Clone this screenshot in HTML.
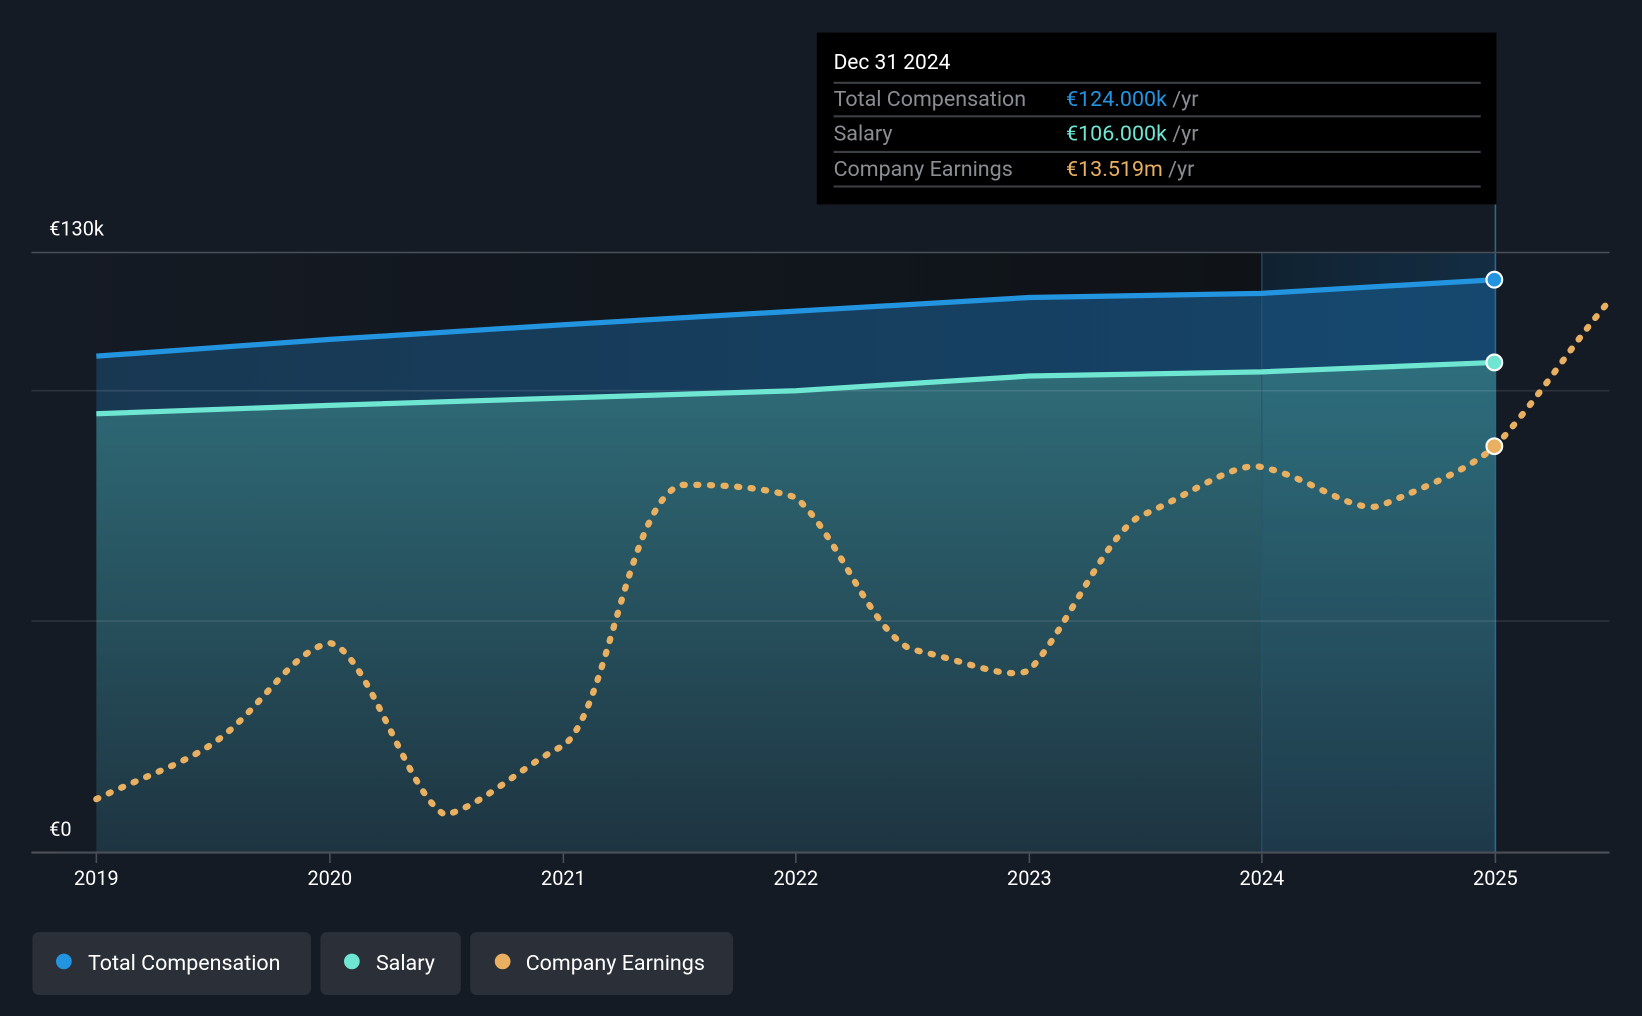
<!DOCTYPE html>
<html><head><meta charset="utf-8"><style>
html,body{margin:0;padding:0;background:#151b24;}
svg{display:block}
text{font-family:"Roboto","Liberation Sans",sans-serif;}
</style></head><body>
<svg width="1642" height="1016" viewBox="0 0 1568 970" xmlns="http://www.w3.org/2000/svg">
<defs>
<linearGradient id="dk" x1="0" x2="1" y1="0" y2="0"><stop offset="0" stop-color="#151b24"/><stop offset="1" stop-color="#0f1318"/></linearGradient>
<linearGradient id="hl" x1="0" x2="1" y1="0" y2="0"><stop offset="0" stop-color="#0f1b27"/><stop offset="1" stop-color="#13263a"/></linearGradient>
<linearGradient id="sal" x1="0" x2="0" y1="0" y2="1"><stop offset="0" stop-color="#2f6d79"/><stop offset="1" stop-color="#1e3441"/></linearGradient>
<linearGradient id="tot" x1="0" x2="1" y1="0" y2="0"><stop offset="0" stop-color="#183852"/><stop offset="1" stop-color="#15446a"/></linearGradient>
</defs>
<rect width="1568" height="970" fill="#151b24"/>
<rect x="30" y="241" width="1175" height="573" fill="url(#dk)"/>
<rect x="1205" y="241" width="223" height="573" fill="url(#hl)"/>
<path d="M92,340 L315,324 L538,310 L760,297 L983,284 L1205,280 L1428,267 L1428,346 L1205,355 L983,359 L760,373 L538,380 L315,387 L92,395 Z" fill="url(#tot)"/>
<path d="M92,395 L315,387 L538,380 L760,373 L983,359 L1205,355 L1428,346 L1428,814 L92,814 Z" fill="url(#sal)"/>
<rect x="1205" y="241" width="223" height="573" fill="#2a7bb0" opacity="0.08"/>
<line x1="1205" y1="241" x2="1205" y2="814" stroke="#2a5570" stroke-width="1"/>
<line x1="1428" y1="195" x2="1428" y2="814" stroke="#2a6a90" stroke-width="1.5"/>
<line x1="30" y1="241" x2="1537" y2="241" stroke="#4a4f58" stroke-width="1.5"/>
<line x1="30" y1="373" x2="1537" y2="373" stroke="#ffffff" stroke-opacity="0.1" stroke-width="1.5"/>
<line x1="30" y1="593" x2="1537" y2="593" stroke="#ffffff" stroke-opacity="0.1" stroke-width="1.5"/>
<line x1="30" y1="814" x2="1537" y2="814" stroke="#4a4f58" stroke-width="2"/>
<g stroke="#4a4f58" stroke-width="1.5">
<line x1="92" y1="814" x2="92" y2="824"/><line x1="315" y1="814" x2="315" y2="824"/><line x1="538" y1="814" x2="538" y2="824"/><line x1="760" y1="814" x2="760" y2="824"/><line x1="983" y1="814" x2="983" y2="824"/><line x1="1205" y1="814" x2="1205" y2="824"/><line x1="1428" y1="814" x2="1428" y2="824"/>
</g>
<path d="M92,340 L315,324 L538,310 L760,297 L983,284 L1205,280 L1428,267" fill="none" stroke="#2394e0" stroke-width="5"/>
<path d="M92,395 L315,387 L538,380 L760,373 L983,359 L1205,355 L1428,346" fill="none" stroke="#6ee6d2" stroke-width="5"/>
<path d="M92,763 C140,740 180,728 210,705 C250,675 280,620 315,614 C350,620 390,760 425,778 C460,770 500,730 538,712 C580,680 600,480 650,463 C700,462 740,468 760,475 C800,510 830,600 870,620 C920,630 960,650 983,640 C1020,600 1060,500 1095,490 C1140,470 1180,440 1205,446 C1250,455 1290,490 1318,483 C1360,465 1400,450 1428,426 C1470,380 1500,330 1537,287" fill="none" stroke="#e8b060" stroke-width="6" stroke-dasharray="2 11" stroke-linecap="round"/>
<circle cx="1427" cy="267" r="7.5" fill="#2394e0" stroke="#fff" stroke-width="2"/>
<circle cx="1427" cy="346" r="7.5" fill="#6ee6d2" stroke="#fff" stroke-width="2"/>
<circle cx="1427" cy="426" r="7.5" fill="#e8b060" stroke="#fff" stroke-width="2"/>
<text x="47" y="225" fill="#fff" font-size="19">€130k</text>
<text x="47" y="798" fill="#fff" font-size="19">€0</text>
<g fill="#fff" font-size="19" text-anchor="middle">
<text x="92" y="845">2019</text><text x="315" y="845">2020</text><text x="538" y="845">2021</text><text x="760" y="845">2022</text><text x="983" y="845">2023</text><text x="1205" y="845">2024</text><text x="1428" y="845">2025</text>
</g>
<rect x="780" y="31" width="649" height="164" fill="#000"/>
<text x="796" y="66" fill="#fff" font-size="20">Dec 31 2024</text>
<g stroke="#3c3f44" stroke-width="2"><line x1="796" y1="79" x2="1414" y2="79"/><line x1="796" y1="111" x2="1414" y2="111"/><line x1="796" y1="145" x2="1414" y2="145"/><line x1="796" y1="178" x2="1414" y2="178"/></g>
<g font-size="20.5">
<text x="796" y="101" fill="#8a8d92">Total Compensation</text>
<text x="1018" y="101" fill="#2394e0">€124.000k <tspan fill="#8a8d92">/yr</tspan></text>
<text x="796" y="134" fill="#8a8d92">Salary</text>
<text x="1018" y="134" fill="#6ee6d2">€106.000k <tspan fill="#8a8d92">/yr</tspan></text>
<text x="796" y="168" fill="#8a8d92">Company Earnings</text>
<text x="1018" y="168" fill="#e8b060">€13.519m <tspan fill="#8a8d92">/yr</tspan></text>
</g>
<rect x="31" y="890" width="266" height="60" rx="6" fill="#2b2f37"/>
<rect x="306" y="890" width="134" height="60" rx="6" fill="#2b2f37"/>
<rect x="449" y="890" width="251" height="60" rx="6" fill="#2b2f37"/>
<circle cx="61" cy="918" r="7.5" fill="#2394e0"/>
<circle cx="336" cy="918" r="7.5" fill="#6ee6d2"/>
<circle cx="480" cy="918" r="7.5" fill="#e8b060"/>
<g fill="#fff" font-size="20.5">
<text x="84" y="926">Total Compensation</text>
<text x="359" y="926">Salary</text>
<text x="502" y="926">Company Earnings</text>
</g>
</svg>
</body></html>
